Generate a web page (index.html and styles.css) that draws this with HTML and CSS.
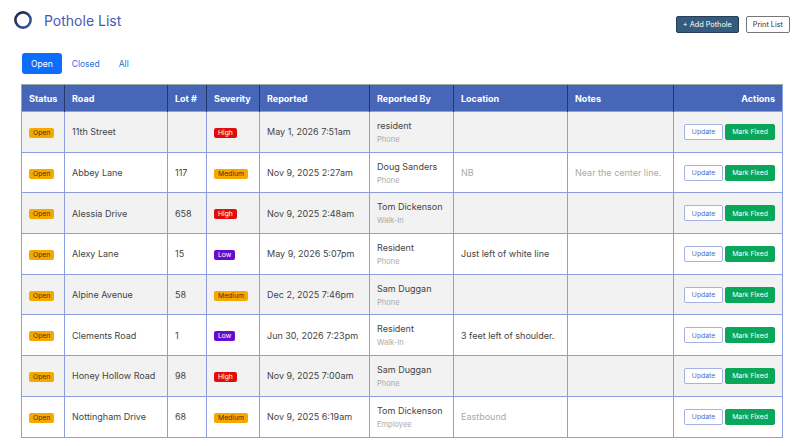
FILE: index.html
```html
<!DOCTYPE html>
<html lang="en">
<head>
  <meta charset="UTF-8">
  <meta name="viewport" content="width=device-width, initial-scale=1.0">
  <title>Pothole List</title>
  <link rel="stylesheet" href="styles.css">
</head>
<body>
  <div class="page">
    <div class="topbar">
      <h1 class="title">
        <svg class="logo" width="20" height="20" viewBox="0 0 20 20">
          <defs>
            <linearGradient id="ring" x1="0" y1="0" x2="1" y2="1">
              <stop offset="0" stop-color="#1c2140"/>
              <stop offset="1" stop-color="#3c5bb0"/>
            </linearGradient>
          </defs>
          <circle cx="10" cy="10" r="7.6" fill="none" stroke="url(#ring)" stroke-width="2.6"/>
        </svg>
        Pothole List
      </h1>
      <div class="top-actions">
        <button class="btn-add">+ Add Pothole</button>
        <button class="btn-print">Print List</button>
      </div>
    </div>

    <div class="tabs">
      <button class="tab active">Open</button>
      <button class="tab">Closed</button>
      <button class="tab">All</button>
    </div>

    <table class="potholes">
      <colgroup>
        <col style="width:43px">
        <col style="width:103px">
        <col style="width:39px">
        <col style="width:53px">
        <col style="width:110px">
        <col style="width:84px">
        <col style="width:114px">
        <col style="width:106px">
        <col style="width:109px">
      </colgroup>
      <thead>
        <tr>
          <th>Status</th>
          <th>Road</th>
          <th>Lot #</th>
          <th>Severity</th>
          <th>Reported</th>
          <th>Reported By</th>
          <th>Location</th>
          <th>Notes</th>
          <th class="right">Actions</th>
        </tr>
      </thead>
      <tbody>
        <tr>
          <td><span class="badge open">Open</span></td>
          <td>11th Street</td>
          <td></td>
          <td><span class="badge high">High</span></td>
          <td>May 1, 2026 7:51am</td>
          <td><div class="who">resident</div><div class="via">Phone</div></td>
          <td></td>
          <td></td>
          <td class="actions"><button class="btn-update">Update</button><button class="btn-fixed">Mark Fixed</button></td>
        </tr>
        <tr>
          <td><span class="badge open">Open</span></td>
          <td>Abbey Lane</td>
          <td>117</td>
          <td><span class="badge medium">Medium</span></td>
          <td>Nov 9, 2025 2:27am</td>
          <td><div class="who">Doug Sanders</div><div class="via">Phone</div></td>
          <td class="muted">NB</td>
          <td class="muted">Near the center line.</td>
          <td class="actions"><button class="btn-update">Update</button><button class="btn-fixed">Mark Fixed</button></td>
        </tr>
        <tr>
          <td><span class="badge open">Open</span></td>
          <td>Alessia Drive</td>
          <td>658</td>
          <td><span class="badge high">High</span></td>
          <td>Nov 9, 2025 2:48am</td>
          <td><div class="who">Tom Dickenson</div><div class="via">Walk-In</div></td>
          <td></td>
          <td></td>
          <td class="actions"><button class="btn-update">Update</button><button class="btn-fixed">Mark Fixed</button></td>
        </tr>
        <tr>
          <td><span class="badge open">Open</span></td>
          <td>Alexy Lane</td>
          <td>15</td>
          <td><span class="badge low">Low</span></td>
          <td>May 9, 2026 5:07pm</td>
          <td><div class="who">Resident</div><div class="via">Phone</div></td>
          <td>Just left of white line</td>
          <td></td>
          <td class="actions"><button class="btn-update">Update</button><button class="btn-fixed">Mark Fixed</button></td>
        </tr>
        <tr>
          <td><span class="badge open">Open</span></td>
          <td>Alpine Avenue</td>
          <td>58</td>
          <td><span class="badge medium">Medium</span></td>
          <td>Dec 2, 2025 7:46pm</td>
          <td><div class="who">Sam Duggan</div><div class="via">Phone</div></td>
          <td></td>
          <td></td>
          <td class="actions"><button class="btn-update">Update</button><button class="btn-fixed">Mark Fixed</button></td>
        </tr>
        <tr>
          <td><span class="badge open">Open</span></td>
          <td>Clements Road</td>
          <td>1</td>
          <td><span class="badge low">Low</span></td>
          <td>Jun 30, 2026 7:23pm</td>
          <td><div class="who">Resident</div><div class="via">Walk-In</div></td>
          <td>3 feet left of shoulder.</td>
          <td></td>
          <td class="actions"><button class="btn-update">Update</button><button class="btn-fixed">Mark Fixed</button></td>
        </tr>
        <tr>
          <td><span class="badge open">Open</span></td>
          <td>Honey Hollow Road</td>
          <td>98</td>
          <td><span class="badge high">High</span></td>
          <td>Nov 9, 2025 7:00am</td>
          <td><div class="who">Sam Duggan</div><div class="via">Phone</div></td>
          <td></td>
          <td></td>
          <td class="actions"><button class="btn-update">Update</button><button class="btn-fixed">Mark Fixed</button></td>
        </tr>
        <tr>
          <td><span class="badge open">Open</span></td>
          <td>Nottingham Drive</td>
          <td>68</td>
          <td><span class="badge medium">Medium</span></td>
          <td>Nov 9, 2025 6:19am</td>
          <td><div class="who">Tom Dickenson</div><div class="via">Employee</div></td>
          <td class="muted">Eastbound</td>
          <td></td>
          <td class="actions"><button class="btn-update">Update</button><button class="btn-fixed">Mark Fixed</button></td>
        </tr>
      </tbody>
    </table>
  </div>
</body>
</html>
```

FILE: styles.css
```css
body {
  margin: 0;
  font-family: Inter, "Noto Sans", sans-serif;
  background-color: #fff;
  color: #444;
}

.page {
  padding: 0 10px 0 21px;
}

.topbar {
  display: flex;
  justify-content: space-between;
  align-items: flex-start;
  height: 53px;
}

.title {
  display: flex;
  align-items: center;
  gap: 11px;
  margin: 10px 0 0 -8px;
  font-size: 14px;
  font-weight: 400;
  color: #4659b8;
}

.top-actions {
  display: flex;
  gap: 7px;
  margin-top: 16px;
}

.top-actions button {
  font-family: inherit;
  font-size: 7.3px;
  height: 17px;
  padding: 0 6px;
  border-radius: 2px;
  cursor: pointer;
}

.btn-add {
  background-color: #355b7d;
  border: 1px solid #263f58;
  color: #fff;
}

.btn-print {
  background-color: #fff;
  border: 1px solid #777;
  color: #333;
}

.tabs {
  display: flex;
  gap: 1px;
  margin: 0 0 10px 1px;
}

.tab {
  font-family: inherit;
  font-size: 8.5px;
  height: 21px;
  padding: 0 9px;
  border: none;
  border-radius: 3px;
  background: none;
  color: #2a6fe0;
  cursor: pointer;
}

.tab.active {
  background-color: #0d6efd;
  color: #fff;
}

.potholes {
  width: 761px;
  table-layout: fixed;
  border-collapse: collapse;
  font-size: 9px;
  border: 1px solid #8c9ee0;
}

.potholes th {
  background-color: #4866b8;
  color: #fff;
  font-weight: 700;
  font-size: 9px;
  text-align: left;
  height: 26px;
  padding: 0 7px;
  border-left: 1px solid #27376e;
  border-top: 1px solid #9aa;
}

.potholes th:first-child {
  border-left: 1px solid #8c9ee0;
}

.potholes th.right {
  text-align: right;
}

.potholes td {
  height: 39.7px;
  padding: 0 7px;
  border: 1px solid #8c9ee0;
  vertical-align: middle;
  white-space: nowrap;
  overflow: hidden;
}

.potholes tbody tr:nth-child(odd) td {
  background-color: #f2f2f2;
}

.potholes .muted {
  color: #aaa;
}

.who {
  color: #444;
}

.via {
  margin-top: 4px;
  font-size: 7.5px;
  color: #aaa;
}

.badge {
  display: inline-block;
  font-size: 6.8px;
  line-height: 10px;
  padding: 0 4px;
  border-radius: 2px;
}

.badge.open,
.badge.medium {
  background-color: #f5a800;
  color: #4a3000;
}

.badge.high {
  background-color: #e10d0d;
  color: #fff;
}

.badge.low {
  background-color: #6a0ad0;
  color: #fff;
}

.actions {
  text-align: right;
}

.actions button {
  font-family: inherit;
  font-size: 6.8px;
  height: 16px;
  border-radius: 2px;
  cursor: pointer;
  vertical-align: middle;
}

.btn-update {
  width: 39px;
  background-color: #fff;
  border: 1px solid #a6b1e4;
  color: #5667c0;
  margin-right: 2px;
}

.btn-fixed {
  width: 50px;
  background-color: #0aa75a;
  border: 1px solid #0aa75a;
  color: #fff;
}
```
